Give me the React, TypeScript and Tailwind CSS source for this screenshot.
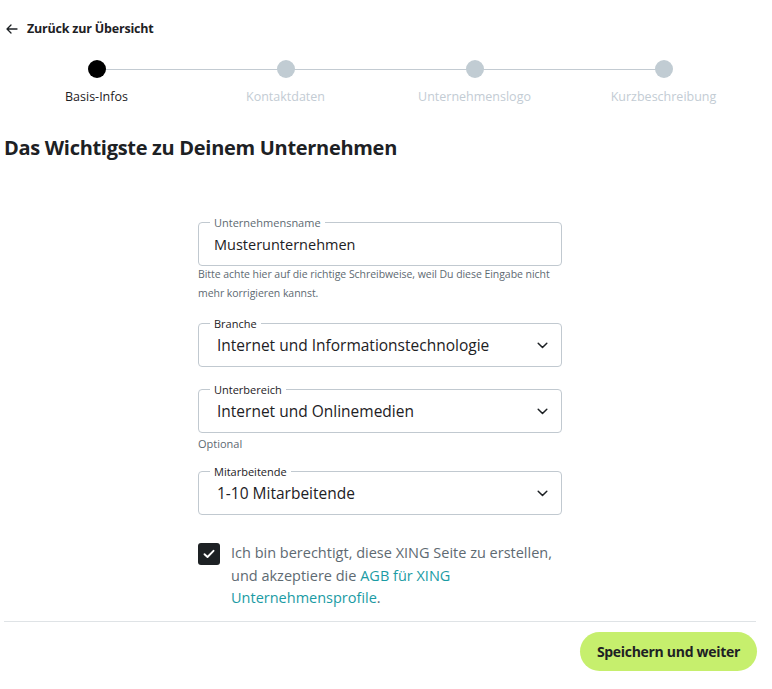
import React from "react";

const font = { fontFamily: '"Open Sans", "Noto Sans", sans-serif' };

function Chevron() {
  return (
    <svg width="11" height="7" viewBox="0 0 11 7" fill="none">
      <path d="M1.2 1.2L5.5 5.5L9.8 1.2" stroke="#1d2124" strokeWidth="1.5" strokeLinecap="round" strokeLinejoin="round" />
    </svg>
  );
}

function SelectField({ label, value }: { label: string; value: string }) {
  return (
    <fieldset className="border border-[#c1c9d0] rounded-[4px] px-[11px] pb-[5px] m-0">
      <legend className="px-[4px] text-[11px] leading-[13px] text-[#1d2124]">{label}</legend>
      <div className="h-[31px] flex items-center justify-between pl-[7px] pr-[2px]">
        <span className="text-[15.5px] text-[#1d2124]">{value}</span>
        <Chevron />
      </div>
    </fieldset>
  );
}

export default function App() {
  const steps = ["Basis-Infos", "Kontaktdaten", "Unternehmenslogo", "Kurzbeschreibung"];
  return (
    <div className="w-[772px] min-h-[689px] bg-white text-[#1d2124]" style={font}>
      <div className="w-[756px] ml-[2px]">
        {/* back link */}
        <div className="pt-[22px] h-[36px] flex items-center gap-[9px] pl-[4px]">
          <svg width="12" height="10" viewBox="0 0 12 10" fill="none">
            <path d="M11 5H1.5M5 1L1 5L5 9" stroke="#1d2124" strokeWidth="1.3" strokeLinecap="round" strokeLinejoin="round" />
          </svg>
          <span className="text-[12.5px] font-bold tracking-[-0.2px]">Zurück zur Übersicht</span>
        </div>

        {/* stepper */}
        <div className="relative mt-[24px]">
          <div className="absolute left-[94.5px] right-[94.5px] top-[8.5px] h-[1px] bg-[#c3cbd2]" />
          <div className="relative grid grid-cols-4">
            {steps.map((s, i) => (
              <div key={s} className="flex flex-col items-center">
                <div className={`w-[18px] h-[18px] rounded-full ${i === 0 ? "bg-black" : "bg-[#c1ccd3]"}`} />
                <div className={`mt-[11px] text-[12.5px] leading-[16px] ${i === 0 ? "text-[#1d2124]" : "text-[#c3ccd4]"}`}>{s}</div>
              </div>
            ))}
          </div>
        </div>

        {/* title */}
        <h1 className="mt-[29px] pl-[2px] text-[20px] leading-[28px] font-bold tracking-[-0.3px]">Das Wichtigste zu Deinem Unternehmen</h1>

        {/* form */}
        <div className="w-[364px] mx-auto mt-[54px]">
          <fieldset className="border border-[#c1c9d0] rounded-[4px] px-[11px] pb-[5px] m-0">
            <legend className="px-[4px] text-[11px] leading-[13px] text-[#5e6a72]">Unternehmensname</legend>
            <div className="h-[31px] flex items-center pl-[4px]">
              <span className="text-[14.5px] text-[#1d2124]">Musterunternehmen</span>
            </div>
          </fieldset>
          <p className="mt-[-1px] text-[10.5px] leading-[19px] text-[#5e6a72] tracking-[-0.05px]">
            Bitte achte hier auf die richtige Schreibweise, weil Du diese Eingabe nicht mehr korrigieren kannst.
          </p>

          <div className="mt-[14px]">
            <SelectField label="Branche" value="Internet und Informationstechnologie" />
          </div>
          <div className="mt-[16px]">
            <SelectField label="Unterbereich" value="Internet und Onlinemedien" />
          </div>
          <p className="mt-[3px] text-[11px] leading-[16px] text-[#5e6a72]">Optional</p>
          <div className="mt-[13px]">
            <SelectField label="Mitarbeitende" value="1-10 Mitarbeitende" />
          </div>

          <div className="mt-[28px] flex items-start gap-[11px]">
            <div className="w-[22px] h-[22px] shrink-0 rounded-[3px] bg-[#1d2124] flex items-center justify-center">
              <svg width="12" height="10" viewBox="0 0 12 10" fill="none">
                <path d="M1.5 5.2L4.5 8L10.5 1.8" stroke="white" strokeWidth="1.9" strokeLinecap="round" strokeLinejoin="round" />
              </svg>
            </div>
            <p className="text-[14.5px] leading-[22.5px] text-[#5e6a72] mt-[-1px]">
              Ich bin berechtigt, diese XING Seite zu erstellen, und akzeptiere die{" "}
              <span className="text-[#1a9ba4]">AGB für XING Unternehmensprofile</span>.
            </p>
          </div>
        </div>

        <div className="mt-[11px] mx-[2px] h-[1px] bg-[#dfe3e6]" />
        <div className="flex justify-end mt-[10px] pr-[1px]">
          <button className="h-[39px] px-[17px] rounded-full bg-[#c6ef6d] text-[14px] font-bold text-[#1d2124] tracking-[-0.3px]">
            Speichern und weiter
          </button>
        </div>
      </div>
    </div>
  );
}
